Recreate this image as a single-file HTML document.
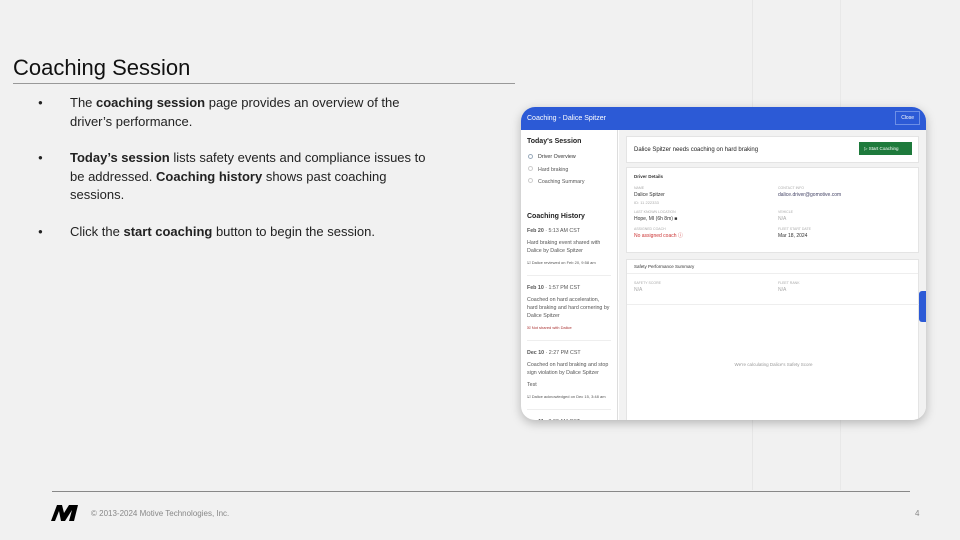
<!DOCTYPE html>
<html><head><meta charset="utf-8"><style>
*{margin:0;padding:0;box-sizing:border-box}
body{width:960px;height:540px;background:#f1f1f1;font-family:"Liberation Sans",sans-serif;position:relative;overflow:hidden;color:#111}
.a{position:absolute}
h1{position:absolute;left:13px;top:55px;font-size:22px;font-weight:400;color:#111}
.hr{position:absolute;left:13px;top:83px;width:502px;height:1px;background:#999}
ul{position:absolute;left:38px;top:94px;width:400px;list-style:none;font-size:13px;line-height:18.5px;color:#222}
ul li{position:relative;padding-left:32px;margin-bottom:18px}
ul li:before{content:"●";position:absolute;left:0;top:0;font-size:8px}
.dev{left:521px;top:107px;width:405px;height:313px;background:#fff;border-radius:14px;overflow:hidden;box-shadow:0 3px 10px rgba(0,0,0,.25)}
.hd{height:23px;background:#2c5ad6;color:#fff;font-size:7px;padding:8px 6px}
.close{position:absolute;right:6px;top:4px;border:1px solid #6d8fe6;padding:3px 5px;font-size:5px;color:#fff}
.side{left:0;top:23px;width:97px;height:290px;border-right:1px solid #ddd;font-size:5.3px;color:#555;padding:6px}
.main{left:98px;top:23px;width:307px;height:290px;background:#f2f2f2}
.card{position:absolute;left:7px;width:293px;background:#fff;border:1px solid #e4e4e4}
.lb{font-size:3.5px;color:#aaa}
.t{font-size:5px;color:#333}
</style></head><body>
<h1>Coaching Session</h1>
<div class="hr"></div>
<ul>
<li>The <b>coaching session</b> page provides an overview of the driver’s performance.</li>
<li><b>Today’s session</b> lists safety events and compliance issues to be addressed. <b>Coaching history</b> shows past coaching sessions.</li>
<li>Click the <b>start coaching</b> button to begin the session.</li>
</ul>
<div class="a" style="left:752px;top:0;width:1px;height:490px;background:#e6e6e6"></div>
<div class="a" style="left:840px;top:0;width:1px;height:490px;background:#e8e8e8"></div>
<div class="a dev">
 <div class="hd">Coaching - Dalice Spitzer<span class="close">Close</span></div>
 <div class="a side">
  <div style="font-size:7px;color:#222;font-weight:bold;margin-top:2px">Today's Session</div>
  <div style="margin-top:6px;line-height:12.5px;padding-left:11px;position:relative">
   <div class="a" style="left:1px;top:3px;width:5px;height:5px;border:1px solid #9ab;border-radius:50%"></div>
   <div class="a" style="left:1px;top:15px;width:5px;height:5px;border:1px solid #ccc;border-radius:50%"></div>
   <div class="a" style="left:1px;top:27px;width:5px;height:5px;border:1px solid #ccc;border-radius:50%"></div>
   <div style="color:#333">Driver Overview</div><div>Hard braking</div><div>Coaching Summary</div>
  </div>
  <div style="font-size:7px;color:#222;font-weight:bold;margin-top:24px">Coaching History</div>
  <div style="margin-top:7px;line-height:8px">
   <div><b>Feb 20</b> · 5:13 AM CST</div>
   <div style="margin-top:4px">Hard braking event shared with Dalice by Dalice Spitzer</div>
   <div style="margin-top:4px;font-size:4px">☑ Dalice reviewed on Feb 20, 9:58 am</div>
   <div style="border-top:1px solid #eee;margin:8px 0"></div>
   <div><b>Feb 10</b> · 1:57 PM CST</div>
   <div style="margin-top:4px">Coached on hard acceleration, hard braking and hard cornering by Dalice Spitzer</div>
   <div style="margin-top:4px;font-size:4px;color:#a33">☒ Not shared with Dalice</div>
   <div style="border-top:1px solid #eee;margin:8px 0"></div>
   <div><b>Dec 10</b> · 2:27 PM CST</div>
   <div style="margin-top:4px">Coached on hard braking and stop sign violation by Dalice Spitzer</div>
   <div style="margin-top:4px">Test</div>
   <div style="margin-top:4px;font-size:4px">☑ Dalice acknowledged on Dec 15, 3:48 am</div>
   <div style="border-top:1px solid #eee;margin:8px 0"></div>
   <div><b>Dec 11</b> · 3:33 AM CST</div>
  </div>
 </div>
 <div class="a main">
  <div class="card" style="top:6px;height:27px;padding:10px 7px;font-size:6px;color:#222">Dalice Spitzer needs coaching on hard braking
   <div class="a" style="right:6px;top:5px;width:53px;height:13px;background:#1e7a3c;color:#fff;font-size:4.5px;padding:4px 5px">▷ Start Coaching</div></div>
  <div class="card" style="top:37px;height:86px;padding:6px 7px">
   <div class="t" style="font-weight:bold;font-size:4.5px">Driver Details</div>
   <div class="a" style="left:7px;top:17px;line-height:7px"><div class="lb">NAME</div><div class="t">Dalice Spitzer</div><div class="lb" style="font-size:4px">ID: 11 222333</div>
    <div class="lb" style="margin-top:3px">LAST KNOWN LOCATION</div><div class="t">Hope, MI (6h 8m) ■</div>
    <div class="lb" style="margin-top:3px">ASSIGNED COACH</div><div class="t" style="color:#c33">No assigned coach ⓘ</div></div>
   <div class="a" style="left:151px;top:17px;line-height:7px"><div class="lb">CONTACT INFO</div><div class="t" style="color:#446">dalice.driver@gomotive.com</div><div>&nbsp;</div>
    <div class="lb" style="margin-top:3px">VEHICLE</div><div class="t" style="color:#aaa">N/A</div>
    <div class="lb" style="margin-top:3px">FLEET START DATE</div><div class="t">Mar 18, 2024</div></div>
  </div>
  <div class="card" style="top:129px;height:170px">
   <div class="t" style="padding:4px 7px;border-bottom:1px solid #eee;font-size:4.5px">Safety Performance Summary</div>
   <div class="a" style="left:7px;top:20px;line-height:7px"><div class="lb">SAFETY SCORE</div><div class="t" style="color:#aaa">N/A</div></div>
   <div class="a" style="left:151px;top:20px;line-height:7px"><div class="lb">FLEET RANK</div><div class="t" style="color:#aaa">N/A</div></div>
   <div class="a" style="left:0;top:44px;width:293px;border-top:1px solid #eee"></div>
   <div class="a" style="left:0;top:102px;width:293px;text-align:center;font-size:4.5px;color:#999">We're calculating Dalice's Safety Score</div>
  </div>
  <div class="a" style="left:300px;top:161px;width:8px;height:31px;background:#2c5ad6;border-radius:3px 0 0 3px"></div>
 </div>
</div>
<div class="a" style="left:52px;top:491px;width:858px;height:1px;background:#888"></div>
<svg class="a" style="left:51px;top:505px" width="27" height="16" viewBox="0 0 27 16"><path d="M0 16 L6 0 L11 0 L13 8 L18 0 L27 0 L23 16 L18 16 L21 5 L14 16 L10 16 L8 6 L4 16Z" fill="#000"/></svg>
<div class="a" style="left:91px;top:509px;font-size:8px;color:#888">© 2013-2024 Motive Technologies, Inc.</div>
<div class="a" style="left:915px;top:509px;font-size:8px;color:#888">4</div>
</body></html>
